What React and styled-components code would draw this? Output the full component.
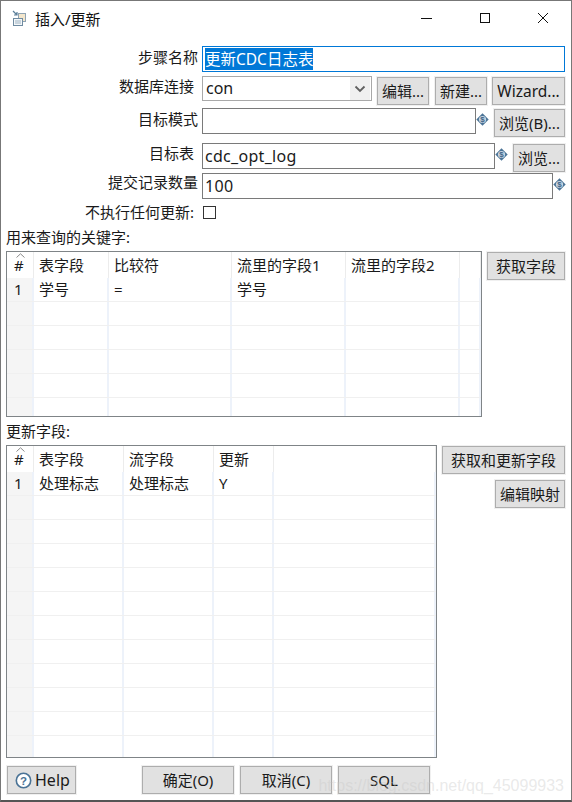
import styled, { createGlobalStyle } from "styled-components";

const keyColumns = "27px 75px 123px 114px 114px 21px";
const updateColumns = "27px 90px 90px 60px 162px";

const keyHeaders = ["#", "表字段", "比较符", "流里的字段1", "流里的字段2", ""];
const keyRows = [["1", "学号", "=", "学号", "", ""]];
const updateHeaders = ["#", "表字段", "流字段", "更新", ""];
const updateRows = [["1", "处理标志", "处理标志", "Y", ""]];

const FieldIcon = () => (
  <IconSlot>
    <svg width="13" height="13" viewBox="0 0 13 13">
      <path d="M6.5 0.3 12.7 6.5 6.5 12.7 0.3 6.5Z" fill="#4a7396" />
      <circle cx="6.5" cy="6.5" r="3.6" fill="#c9d6e2" />
      <text x="6.5" y="9.2" fontSize="8" fontWeight="700" textAnchor="middle" fill="#3f6688" fontFamily="Liberation Sans">
        $
      </text>
    </svg>
  </IconSlot>
);

const StepIcon = () => (
  <svg width="15" height="17" viewBox="0 0 15 17">
    <path d="M1 1 5 5M5 2V5H2" fill="none" stroke="#5b7f99" strokeWidth="1.2" />
    <rect x="6.5" y="3.5" width="7" height="8" fill="#f3e6cc" stroke="#8fa3b3" />
    <rect x="1.5" y="8.5" width="9" height="7" fill="#f4f7f9" stroke="#6f8ba1" />
    <path d="M3 11H9M3 13H9" stroke="#9db2c2" />
  </svg>
);

const DataGrid = ({ columns, headers, rows, totalRows, height }) => {
  const blanks = Array.from({ length: totalRows - rows.length }, () =>
    headers.map(() => "")
  );
  return (
    <GridFrame $height={height}>
      <SortMark>
        <svg width="9" height="5" viewBox="0 0 9 5">
          <path d="M0.5 4.5 4.5 0.8 8.5 4.5" fill="none" stroke="#8a8a8a" />
        </svg>
      </SortMark>
      <GridHead $columns={columns}>
        {headers.map((text, i) => (
          <HeadCell key={i} $index={i}>
            {text}
          </HeadCell>
        ))}
      </GridHead>
      {[...rows, ...blanks].map((row, r) => (
        <GridRow key={r} $columns={columns}>
          {row.map((text, i) => (
            <Cell key={i} $index={i}>
              {text}
            </Cell>
          ))}
        </GridRow>
      ))}
    </GridFrame>
  );
};

const App = () => (
  <>
    <GlobalStyle />
    <Window>
      <TitleBar>
        <TitleLeft>
          <StepIcon />
          <Title>插入/更新</Title>
        </TitleLeft>
        <WindowControls>
          <svg width="12" height="12" viewBox="0 0 12 12">
            <path d="M0 6.5H11" stroke="#111" />
          </svg>
          <svg width="12" height="12" viewBox="0 0 12 12">
            <rect x="1.5" y="1.5" width="9" height="9" fill="none" stroke="#111" />
          </svg>
          <svg width="12" height="12" viewBox="0 0 12 12">
            <path d="M1 1 11 11M11 1 1 11" stroke="#111" />
          </svg>
        </WindowControls>
      </TitleBar>

      <FieldRow $top={8}>
        <FieldLabel $raise={3}>步骤名称</FieldLabel>
        <TextInput $focused $width={363}>
          <Selected>更新CDC日志表</Selected>
        </TextInput>
      </FieldRow>

      <FieldRow $top={4}>
        <FieldLabel $raise={2} $inset={4}>数据库连接</FieldLabel>
        <ComboBox>
          con
          <ComboArrow>
            <svg width="12" height="8" viewBox="0 0 12 8">
              <path d="M1.5 1.5 6 6 10.5 1.5" fill="none" stroke="#606060" strokeWidth="1.8" />
            </svg>
          </ComboArrow>
        </ComboBox>
        <Button $width={52} $left={5} $top={1}>编辑...</Button>
        <Button $width={52} $left={6} $top={1}>新建...</Button>
        <Button $width={73} $left={5} $top={1} $size={15.5}>Wizard...</Button>
      </FieldRow>

      <FieldRow $top={3}>
        <FieldLabel $raise={3}>目标模式</FieldLabel>
        <TextInput $width={274} />
        <FieldIcon />
        <Button $width={71} $left={5} $top={1}>浏览(B)...</Button>
      </FieldRow>

      <FieldRow $top={6}>
        <FieldLabel $raise={2} $inset={4}>目标表</FieldLabel>
        <TextInput $width={293}>cdc_opt_log</TextInput>
        <FieldIcon />
        <Button $width={52} $left={5} $top={1}>浏览...</Button>
      </FieldRow>

      <FieldRow $top={1}>
        <FieldLabel $raise={1}>提交记录数量</FieldLabel>
        <TextInput $width={351}>100</TextInput>
        <FieldIcon />
      </FieldRow>

      <CheckRow>
        <FieldLabel $inset={4}>不执行任何更新:</FieldLabel>
        <CheckBox />
      </CheckRow>

      <SectionLabel $top={8}>用来查询的关键字:</SectionLabel>
      <GridSection>
        <DataGrid columns={keyColumns} headers={keyHeaders} rows={keyRows} totalRows={6} height={166} />
        <Button $width={78} $left={5} $top={1}>获取字段</Button>
      </GridSection>

      <SectionLabel $top={4}>更新字段:</SectionLabel>
      <GridSection>
        <DataGrid columns={updateColumns} headers={updateHeaders} rows={updateRows} totalRows={20} height={313} />
        <SideButtons>
          <Button $width={123}>获取和更新字段</Button>
          <Button $width={70}>编辑映射</Button>
        </SideButtons>
      </GridSection>

      <Footer>
        <HelpButton $size={16}>
          <svg width="17" height="17" viewBox="0 0 17 17">
            <circle cx="8.5" cy="8.5" r="7.2" fill="#fff" stroke="#4a7396" strokeWidth="1.6" />
            <text x="8.5" y="12.6" fontSize="11.5" fontWeight="700" textAnchor="middle" fill="#4a7396" fontFamily="Liberation Sans">
              ?
            </text>
          </svg>
          Help
        </HelpButton>
        <FooterButtons>
          <Button $width={92}>确定(O)</Button>
          <Button $width={92}>取消(C)</Button>
          <Button $width={92}>SQL</Button>
        </FooterButtons>
      </Footer>

      <Watermark>https://blog.csdn.net/qq_45099933</Watermark>
    </Window>
  </>
);

const GlobalStyle = createGlobalStyle`
  html, body {
    margin: 0;
    padding: 0;
    background: #ffffff;
  }
  body {
    font-family: "Noto Sans", "Noto Sans CJK SC", sans-serif;
    font-size: 15px;
    color: #1a1a1a;
  }
`;

const Window = styled.div`
  position: relative;
  box-sizing: border-box;
  width: 572px;
  height: 802px;
  padding: 0 6px 0 5px;
  background: #ffffff;
  border: 1px solid #777777;
  border-bottom: 2px solid #555555;
  overflow: hidden;
`;

const TitleBar = styled.div`
  box-sizing: border-box;
  display: flex;
  align-items: center;
  justify-content: space-between;
  height: 37px;
  margin: 0 -6px 0 -5px;
  padding-bottom: 3px;
`;

const TitleLeft = styled.div`
  display: flex;
  align-items: center;
  gap: 8px;
  padding-left: 11px;
`;

const Title = styled.span`
  font-size: 15px;
  color: #111111;
`;

const WindowControls = styled.div`
  display: flex;
  align-items: center;
  gap: 46px;
  padding-right: 22px;
`;

const FieldRow = styled.div`
  display: flex;
  align-items: flex-start;
  margin-top: ${({ $top }) => $top}px;
`;

const CheckRow = styled.div`
  display: flex;
  align-items: center;
  height: 14px;
  margin-top: 6px;
`;

const FieldLabel = styled.label`
  flex: none;
  box-sizing: border-box;
  width: 192px;
  margin-right: 4px;
  padding-right: ${({ $inset }) => $inset || 0}px;
  margin-top: ${({ $raise }) => $raise || 0}px;
  text-align: right;
  line-height: 16px;
  white-space: nowrap;
`;

const TextInput = styled.div`
  flex: none;
  box-sizing: border-box;
  width: ${({ $width }) => $width}px;
  height: 26px;
  padding-left: 2px;
  font-size: 16px;
  letter-spacing: 0.3px;
  border: 1px solid ${({ $focused }) => ($focused ? "#0078d7" : "#7a7a7a")};
  line-height: 24px;
  white-space: nowrap;
`;

const Selected = styled.span`
  display: inline-block;
  height: 22px;
  font-size: 15.5px;
  letter-spacing: 0;
  line-height: 22px;
  background: #0078d7;
  color: #ffffff;
`;

const ComboBox = styled.div`
  flex: none;
  position: relative;
  box-sizing: border-box;
  width: 170px;
  height: 25px;
  padding-left: 3px;
  font-size: 16px;
  border: 1px solid #a9a9a9;
  line-height: 23px;
`;

const ComboArrow = styled.span`
  position: absolute;
  top: 0;
  right: 1px;
  display: flex;
  align-items: center;
  justify-content: center;
  width: 20px;
  height: 23px;
  background: #f0f0f0;
`;

const IconSlot = styled.span`
  flex: none;
  display: flex;
  width: 13px;
  height: 13px;
  margin: 5px 0 0 0;
`;

const Button = styled.button`
  flex: none;
  box-sizing: border-box;
  width: ${({ $width }) => $width}px;
  height: 28px;
  margin: ${({ $top }) => $top || 0}px 0 0 ${({ $left }) => $left || 0}px;
  padding: 0;
  font-family: inherit;
  font-size: ${({ $size }) => $size || 15}px;
  line-height: 24px;
  color: #1a1a1a;
  white-space: nowrap;
  background: #e1e1e1;
  border: 1px solid #adadad;
  border-radius: 0;
  outline: 1px solid #f0f0f0;
`;

const CheckBox = styled.span`
  box-sizing: border-box;
  width: 13px;
  height: 13px;
  margin-left: 1px;
  background: #ffffff;
  border: 1px solid #333333;
`;

const SectionLabel = styled.div`
  height: 20px;
  margin-top: ${({ $top }) => $top}px;
  line-height: 20px;
  white-space: nowrap;
`;

const GridSection = styled.div`
  display: flex;
  align-items: flex-start;
  margin-top: 4px;
`;

const GridFrame = styled.div`
  flex: none;
  position: relative;
  box-sizing: border-box;
  height: ${({ $height }) => $height}px;
  border: 1px solid #7f8487;
  overflow: hidden;
`;

const SortMark = styled.span`
  position: absolute;
  top: 1px;
  left: 9px;
  display: flex;
`;

const GridHead = styled.div`
  display: grid;
  grid-template-columns: ${({ $columns }) => $columns};
  height: 26px;
`;

const HeadCell = styled.div`
  box-sizing: border-box;
  padding: 4px 0 0 ${({ $index }) => ($index === 0 ? 7 : 5)}px;
  line-height: 18px;
  white-space: nowrap;
  border-right: 1px solid #ececec;
`;

const GridRow = styled.div`
  display: grid;
  grid-template-columns: ${({ $columns }) => $columns};
  height: 24px;
  border-bottom: 1px solid #f0f0f0;
  box-sizing: border-box;
`;

const Cell = styled.div`
  box-sizing: border-box;
  padding-left: ${({ $index }) => ($index === 0 ? 7 : 5)}px;
  line-height: 22px;
  white-space: nowrap;
  background: ${({ $index }) => ($index === 0 ? "#f5f5f5" : "#ffffff")};
  border-right: 2px solid #edf2fa;
`;

const SideButtons = styled.div`
  display: flex;
  flex-direction: column;
  align-items: flex-end;
  gap: 6px;
  margin: 1px 0 0 5px;
`;

const Footer = styled.div`
  display: flex;
  align-items: flex-start;
  margin-top: 8px;
`;

const HelpButton = styled(Button)`
  display: flex;
  align-items: center;
  gap: 3px;
  width: 69px;
  margin-left: 1px;
  padding-left: 7px;
`;

const FooterButtons = styled.div`
  display: flex;
  gap: 6px;
  margin-left: 66px;
`;

const Watermark = styled.span`
  position: absolute;
  right: 7px;
  bottom: 5px;
  font-family: "Liberation Sans", sans-serif;
  font-size: 16px;
  color: rgba(200, 200, 200, 0.4);
  white-space: nowrap;
  pointer-events: none;
`;

export default App;
